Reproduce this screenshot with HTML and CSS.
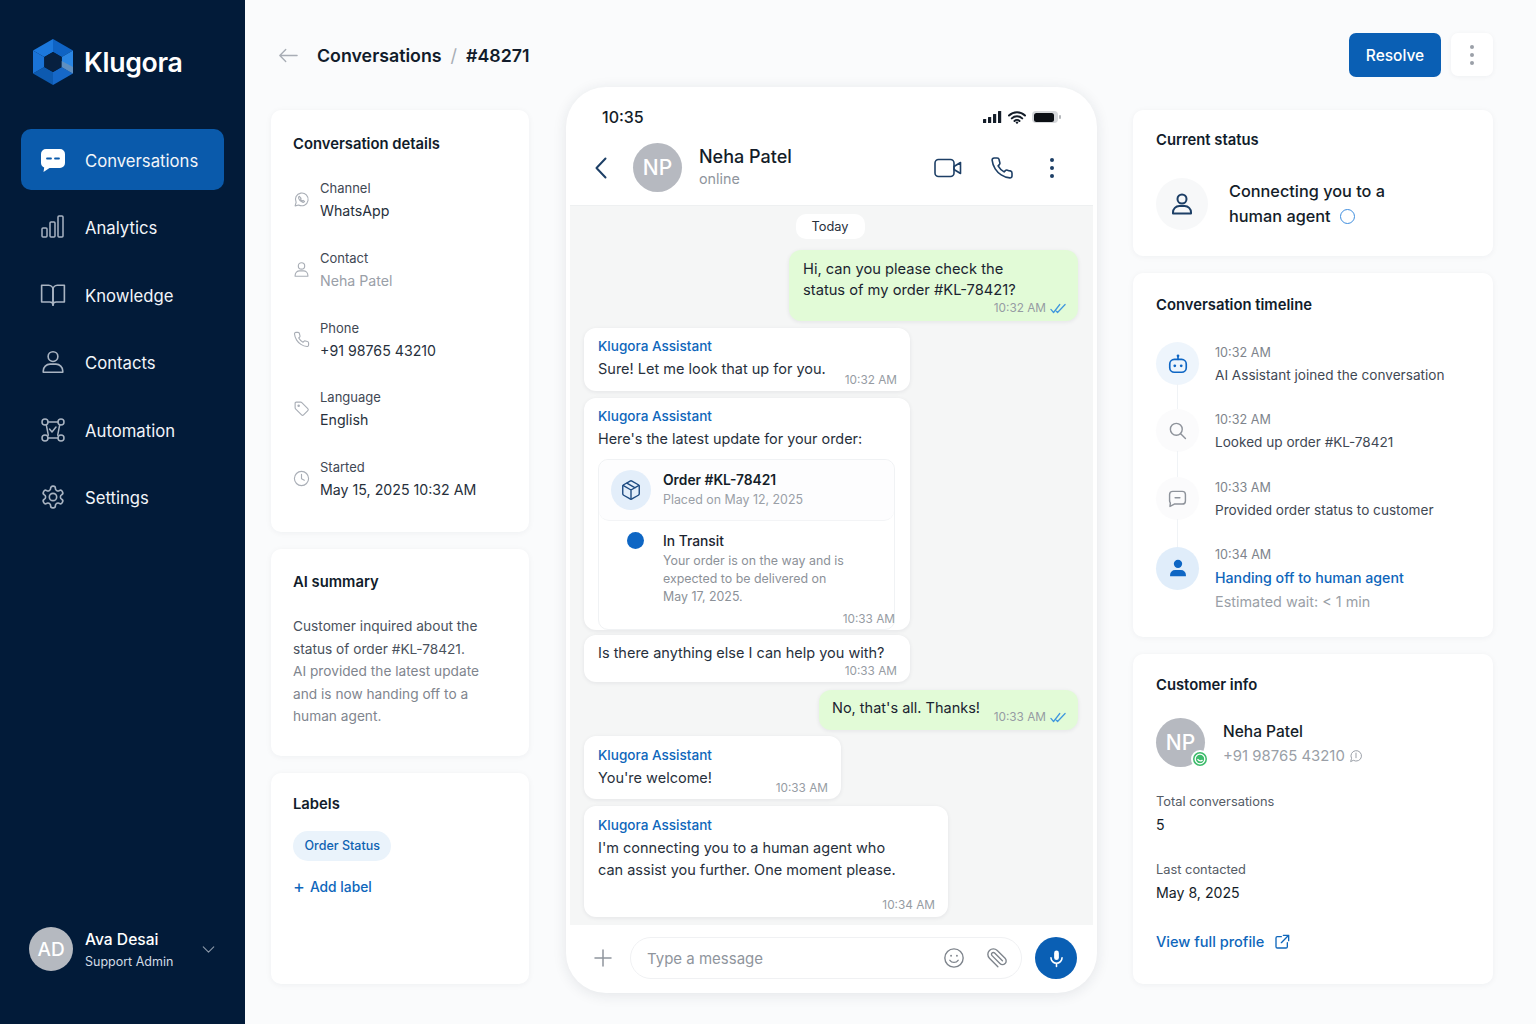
FILE: index.html
```html
<!DOCTYPE html>
<html lang="en">
<head>
<meta charset="utf-8">
<title>Klugora – Conversation #48271</title>
<link rel="stylesheet" href="styles.css">
</head>
<body>
<svg class="defs" aria-hidden="true">
  <symbol id="i-phone" viewBox="0 0 24 24"><path d="M22 16.92v3a2 2 0 0 1-2.18 2 19.79 19.79 0 0 1-8.63-3.07 19.5 19.5 0 0 1-6-6 19.79 19.79 0 0 1-3.07-8.67A2 2 0 0 1 4.11 2h3a2 2 0 0 1 2 1.72 12.84 12.84 0 0 0 .7 2.81 2 2 0 0 1-.45 2.11L8.09 9.91a16 16 0 0 0 6 6l1.27-1.27a2 2 0 0 1 2.11-.45 12.84 12.84 0 0 0 2.81.7A2 2 0 0 1 22 16.92z"/></symbol>
  <symbol id="i-person" viewBox="0 0 24 24"><circle cx="12" cy="7" r="4.5"/><path d="M3 21.5v-1.2A6.3 6.3 0 0 1 9.3 14h5.4a6.3 6.3 0 0 1 6.3 6.3v1.2z"/></symbol>
  <symbol id="i-checks" viewBox="0 0 18 12"><path d="M1 7l3 3.5L11 1.5M7 9l1.5 1.5L17 1.5"/></symbol>
</svg>

<div class="app">
  <aside class="sidebar">
    <div class="brand">
      <svg class="brand-mark" viewBox="0 0 40 46">
        <polygon points="20,0 20,13 11.3,18 0,11.5" fill="#1c78dc"/>
        <polygon points="20,0 40,11.5 28.7,18 20,13" fill="#0f63c4"/>
        <polygon points="40,11.5 40,34.5 28.7,28 28.7,18" fill="#2a86e4"/>
        <polygon points="40,34.5 20,46 20,33 28.7,28" fill="#1668c8"/>
        <polygon points="20,46 0,34.5 11.3,28 20,33" fill="#0d5ab0"/>
        <polygon points="0,34.5 0,11.5 11.3,18 11.3,28" fill="#1a73d6"/>
        <polygon points="20,13 28.7,18 28.7,28 20,33 11.3,28 11.3,18" fill="#07203f"/>
        <polygon points="28.7,22 40,28 40,34.5 28.7,28" fill="#5f8fc0"/>
      </svg>
      <span class="brand-name">Klugora</span>
    </div>
    <nav class="nav">
      <a class="nav-item active">
        <svg class="nav-icon" viewBox="0 0 26 26"><path class="fill-white" d="M6 2h14a5 5 0 0 1 5 5v9a5 5 0 0 1-5 5H9.5L3.5 25l.7-4.6A5 5 0 0 1 1 16V7a5 5 0 0 1 5-5z"/><path class="dash" d="M7 11.5h4M15 11.5h4"/></svg>
        <span>Conversations</span>
      </a>
      <a class="nav-item">
        <svg class="nav-icon" viewBox="0 0 26 26"><rect x="2" y="14" width="5" height="9" rx="1"/><rect x="10" y="8" width="5" height="15" rx="1"/><rect x="18" y="2" width="5" height="21" rx="1"/></svg>
        <span>Analytics</span>
      </a>
      <a class="nav-item">
        <svg class="nav-icon" viewBox="0 0 24 24"><path d="M1.5 3H8a4 4 0 0 1 4 4v14.5a3 3 0 0 0-3-3H1.5z"/><path d="M22.5 3H16a4 4 0 0 0-4 4v14.5a3 3 0 0 1 3-3h7.5z"/></svg>
        <span>Knowledge</span>
      </a>
      <a class="nav-item">
        <svg class="nav-icon"><use href="#i-person"/></svg>
        <span>Contacts</span>
      </a>
      <a class="nav-item">
        <svg class="nav-icon" viewBox="0 0 26 26"><circle cx="5" cy="5" r="3"/><circle cx="21" cy="5" r="3"/><circle cx="5" cy="21" r="3"/><circle cx="21" cy="21" r="3"/><path d="M8 5h10M8 21h10M6.3 7.8l2 10.4M19.7 7.8l-2 10.4"/><path d="M9.5 12l2.5 3 4-5"/></svg>
        <span>Automation</span>
      </a>
      <a class="nav-item">
        <svg class="nav-icon" viewBox="0 0 24 24"><path d="M12.22 2h-.44a2 2 0 0 0-2 2v.18a2 2 0 0 1-1 1.73l-.43.25a2 2 0 0 1-2 0l-.15-.08a2 2 0 0 0-2.73.73l-.22.38a2 2 0 0 0 .73 2.73l.15.1a2 2 0 0 1 1 1.72v.51a2 2 0 0 1-1 1.74l-.15.09a2 2 0 0 0-.73 2.73l.22.38a2 2 0 0 0 2.73.73l.15-.08a2 2 0 0 1 2 0l.43.25a2 2 0 0 1 1 1.73V20a2 2 0 0 0 2 2h.44a2 2 0 0 0 2-2v-.18a2 2 0 0 1 1-1.73l.43-.25a2 2 0 0 1 2 0l.15.08a2 2 0 0 0 2.73-.73l.22-.39a2 2 0 0 0-.73-2.73l-.15-.08a2 2 0 0 1-1-1.74v-.5a2 2 0 0 1 1-1.74l.15-.09a2 2 0 0 0 .73-2.73l-.22-.38a2 2 0 0 0-2.73-.73l-.15.08a2 2 0 0 1-2 0l-.43-.25a2 2 0 0 1-1-1.73V4a2 2 0 0 0-2-2z"/><circle cx="12" cy="12" r="3.4"/></svg>
        <span>Settings</span>
      </a>
    </nav>
    <div class="user">
      <div class="user-avatar">AD</div>
      <div class="user-text">
        <div class="user-name">Ava Desai</div>
        <div class="user-role">Support Admin</div>
      </div>
      <svg class="user-chev" viewBox="0 0 14 8"><path d="M1 1l6 6 6-6"/></svg>
    </div>
  </aside>

  <main class="main">
    <section class="col">
      <header class="crumbs">
        <svg class="back" viewBox="0 0 22 16"><path d="M21 8H2M8.5 1.5L2 8l6.5 6.5"/></svg>
        <span class="crumb">Conversations</span>
        <span class="crumb-sep">/</span>
        <span class="crumb">#48271</span>
      </header>

      <div class="card details">
        <h2 class="card-title">Conversation details</h2>
        <div class="detail-list">
          <div class="detail">
            <svg class="detail-icon" viewBox="0 0 24 24"><path d="M3 21l1.4-5A9 9 0 1 1 8 19.7z"/><path d="M9 7.5c-1 .5-1.4 1.5-1 2.8a8 8 0 0 0 5.5 5.5c1.3.4 2.3 0 2.8-1l-2-1.5-1 .8a5 5 0 0 1-2.7-2.8l.8-1z"/></svg>
            <div><div class="detail-label">Channel</div><div class="detail-value">WhatsApp</div></div>
          </div>
          <div class="detail">
            <svg class="detail-icon"><use href="#i-person"/></svg>
            <div><div class="detail-label">Contact</div><div class="detail-value muted">Neha Patel</div></div>
          </div>
          <div class="detail">
            <svg class="detail-icon"><use href="#i-phone"/></svg>
            <div><div class="detail-label">Phone</div><div class="detail-value">+91 98765 43210</div></div>
          </div>
          <div class="detail">
            <svg class="detail-icon" viewBox="0 0 24 24"><path d="M3 4.5A1.5 1.5 0 0 1 4.5 3H11a2 2 0 0 1 1.4.6l8.5 8.5a2 2 0 0 1 0 2.8l-6 6a2 2 0 0 1-2.8 0L3.6 12.4A2 2 0 0 1 3 11z"/><circle cx="8" cy="8" r="1"/></svg>
            <div><div class="detail-label">Language</div><div class="detail-value">English</div></div>
          </div>
          <div class="detail">
            <svg class="detail-icon" viewBox="0 0 24 24"><circle cx="12" cy="12" r="10"/><path d="M12 6v6.5l4 2"/></svg>
            <div><div class="detail-label">Started</div><div class="detail-value">May 15, 2025 10:32 AM</div></div>
          </div>
        </div>
      </div>

      <div class="card summary">
        <h2 class="card-title">AI summary</h2>
        <p class="summary-text">Customer inquired about the<br>status of order #KL-78421.<br><span class="fade">AI provided the latest update<br>and is now handing off to a<br>human agent.</span></p>
      </div>

      <div class="card labels">
        <h2 class="card-title">Labels</h2>
        <span class="tag">Order Status</span>
        <a class="add-label"><span class="add-plus">+</span>Add label</a>
      </div>
    </section>

    <section class="phone-col">
      <div class="phone">
        <div class="status-bar">
          <span class="clock">10:35</span>
          <span class="status-icons">
            <svg class="signal" viewBox="0 0 19 12"><rect x="0" y="8" width="3.2" height="4" rx=".6"/><rect x="5" y="6" width="3.2" height="6" rx=".6"/><rect x="10" y="3" width="3.2" height="9" rx=".6"/><rect x="15" y="0" width="3.2" height="12" rx=".6"/></svg>
            <svg class="wifi" viewBox="0 0 18 13"><path d="M1 4.5a11.5 11.5 0 0 1 16 0M3.8 7.4a7.5 7.5 0 0 1 10.4 0M6.5 10a3.6 3.6 0 0 1 5 0"/><circle cx="9" cy="11.6" r="1.2"/></svg>
            <span class="battery"><span class="battery-level"></span></span>
          </span>
        </div>
        <div class="chat-head">
          <svg class="chat-back" viewBox="0 0 12 22"><path d="M10.5 1.5L1.5 11l9 9.5"/></svg>
          <div class="avatar chat-avatar">NP</div>
          <div class="chat-who">
            <div class="chat-name">Neha Patel</div>
            <div class="chat-status">online</div>
          </div>
          <svg class="head-icon video" viewBox="0 0 28 20"><rect x="1" y="1.5" width="19" height="17" rx="3.5"/><path d="M20 8.5l6.5-4v11l-6.5-4z"/></svg>
          <svg class="head-icon call"><use href="#i-phone"/></svg>
          <span class="head-dots"><i></i><i></i><i></i></span>
        </div>

        <div class="chat">
          <div class="day">Today</div>

          <div class="bubble out first-out">
            <div class="msg">Hi, can you please check the<br>status of my order #KL-78421?</div>
            <div class="meta"><span class="time">10:32 AM</span><svg class="checks"><use href="#i-checks"/></svg></div>
          </div>

          <div class="bubble in b-lookup">
            <div class="sender">Klugora Assistant</div>
            <div class="row-end"><div class="msg">Sure! Let me look that up for you.</div><span class="time">10:32 AM</span></div>
          </div>

          <div class="bubble in b-order">
            <div class="sender">Klugora Assistant</div>
            <div class="msg">Here's the latest update for your order:</div>
            <div class="order">
              <div class="order-head">
                <div class="order-icon">
                  <svg viewBox="0 0 24 24"><path d="M21 8a2 2 0 0 0-1-1.73l-7-4a2 2 0 0 0-2 0l-7 4A2 2 0 0 0 3 8v8a2 2 0 0 0 1 1.73l7 4a2 2 0 0 0 2 0l7-4A2 2 0 0 0 21 16Z"/><path d="M3.3 7l8.7 5 8.7-5M12 22V12M7.5 4.6l9 5.1"/></svg>
                </div>
                <div>
                  <div class="order-id">Order #KL-78421</div>
                  <div class="order-date">Placed on May 12, 2025</div>
                </div>
              </div>
              <div class="transit">
                <span class="transit-dot"></span>
                <div>
                  <div class="transit-title">In Transit</div>
                  <div class="transit-text">Your order is on the way and is<br>expected to be delivered on<br>May 17, 2025.</div>
                </div>
              </div>
              <div class="time order-time">10:33 AM</div>
            </div>
          </div>

          <div class="bubble in b-else">
            <div class="msg">Is there anything else I can help you with?</div>
            <div class="time align-right">10:33 AM</div>
          </div>

          <div class="bubble out second-out">
            <div class="msg">No, that's all. Thanks!</div>
            <div class="meta low"><span class="time">10:33 AM</span><svg class="checks"><use href="#i-checks"/></svg></div>
          </div>

          <div class="bubble in b-welcome">
            <div class="sender">Klugora Assistant</div>
            <div class="row-end"><div class="msg">You're welcome!</div><span class="time">10:33 AM</span></div>
          </div>

          <div class="bubble in b-connect">
            <div class="sender">Klugora Assistant</div>
            <div class="msg">I'm connecting you to a human agent who<br>can assist you further. One moment please.</div>
            <div class="time align-right connect-time">10:34 AM</div>
          </div>
        </div>

        <div class="composer">
          <svg class="plus" viewBox="0 0 18 18"><path d="M9 1v16M1 9h16"/></svg>
          <div class="input">
            <span class="placeholder">Type a message</span>
            <svg class="input-icon" viewBox="0 0 24 24"><circle cx="12" cy="12" r="10"/><path d="M7.5 14.5a5.5 5.5 0 0 0 9 0"/><circle class="solid" cx="8.8" cy="9.5" r="1"/><circle class="solid" cx="15.2" cy="9.5" r="1"/></svg>
            <svg class="input-icon clip" viewBox="0 0 24 24"><path d="M21.44 11.05l-9.19 9.19a6 6 0 0 1-8.49-8.49l8.57-8.57A4 4 0 1 1 18 8.84l-8.59 8.57a2 2 0 0 1-2.83-2.83l8.49-8.48"/></svg>
          </div>
          <button class="mic">
            <svg viewBox="0 0 24 24"><rect class="solid-white" x="9" y="2" width="6" height="12" rx="3"/><path d="M5 11a7 7 0 0 0 14 0M12 18v4"/></svg>
          </button>
        </div>
      </div>
    </section>

    <section class="col">
      <div class="actions">
        <button class="resolve">Resolve</button>
        <button class="more"><i></i><i></i><i></i></button>
      </div>

      <div class="card status">
        <h2 class="card-title">Current status</h2>
        <div class="status-row">
          <div class="status-icon"><svg><use href="#i-person"/></svg></div>
          <div class="status-text">Connecting you to a<br>human agent <span class="ring"></span></div>
        </div>
      </div>

      <div class="card timeline">
        <h2 class="card-title">Conversation timeline</h2>
        <div class="tl-list">
          <div class="tl-item">
            <div class="tl-icon blue">
              <svg viewBox="0 0 24 24"><rect x="3" y="7" width="18" height="14" rx="5"/><path d="M12 7V4"/><circle class="solid-blue" cx="12" cy="3" r="1.5"/><circle class="solid-blue" cx="8.5" cy="14" r="1.5"/><circle class="solid-blue" cx="15.5" cy="14" r="1.5"/></svg>
            </div>
            <div><div class="tl-time">10:32 AM</div><div class="tl-text">AI Assistant joined the conversation</div></div>
          </div>
          <div class="tl-item">
            <div class="tl-icon"><svg viewBox="0 0 24 24"><circle cx="10.5" cy="10.5" r="7.5"/><path d="M16 16l6 6"/></svg></div>
            <div><div class="tl-time">10:32 AM</div><div class="tl-text">Looked up order #KL-78421</div></div>
          </div>
          <div class="tl-item">
            <div class="tl-icon"><svg viewBox="0 0 24 24"><path d="M6 3h12a4 4 0 0 1 4 4v8a4 4 0 0 1-4 4H8l-5.5 3L3 17.5A4 4 0 0 1 2 15V7a4 4 0 0 1 4-4z"/><path d="M9 11h6"/></svg></div>
            <div><div class="tl-time">10:33 AM</div><div class="tl-text">Provided order status to customer</div></div>
          </div>
          <div class="tl-item last">
            <div class="tl-icon big">
              <svg viewBox="0 0 24 24"><circle class="solid-blue" cx="12" cy="7" r="5"/><path class="solid-blue" d="M2.5 22v-1.5A6 6 0 0 1 8.5 14.5h7a6 6 0 0 1 6 6V22z"/></svg>
            </div>
            <div><div class="tl-time">10:34 AM</div><div class="tl-text hand">Handing off to human agent</div><div class="tl-wait">Estimated wait: &lt; 1 min</div></div>
          </div>
        </div>
      </div>

      <div class="card customer">
        <h2 class="card-title">Customer info</h2>
        <div class="cust-head">
          <div class="avatar cust-avatar">NP
            <span class="wa-badge"><svg viewBox="0 0 16 16"><circle cx="8" cy="8" r="5.5"/><path d="M5.5 8.5c1 1.5 3 2 5 1"/></svg></span>
          </div>
          <div>
            <div class="cust-name">Neha Patel</div>
            <div class="cust-phone">+91 98765 43210
              <svg viewBox="0 0 24 24"><path d="M3 21l1.4-5A9 9 0 1 1 8 19.7z"/><path d="M12 7v8"/></svg>
            </div>
          </div>
        </div>
        <div class="cust-stat"><div class="stat-label">Total conversations</div><div class="stat-value">5</div></div>
        <div class="cust-stat"><div class="stat-label">Last contacted</div><div class="stat-value">May 8, 2025</div></div>
        <a class="profile-link">View full profile
          <svg viewBox="0 0 24 24"><path d="M11 4H5a2 2 0 0 0-2 2v13a2 2 0 0 0 2 2h13a2 2 0 0 0 2-2v-6"/><path d="M14 2h8v8M22 2L11 13"/></svg>
        </a>
      </div>
    </section>
  </main>
</div>
</body>
</html>
```

FILE: styles.css
```css
* { box-sizing: border-box; }
html, body { margin: 0; padding: 0; height: 100%; }
body { font-family: Inter, "Liberation Sans", sans-serif; color: #1b2430; background: #fafbfc; overflow: hidden; }
h2, p { margin: 0; }
svg { display: block; fill: none; stroke: currentColor; stroke-linecap: round; stroke-linejoin: round; }
.defs { width: 0; height: 0; position: absolute; }
.app { display: flex; width: 1536px; height: 1024px; }

/* Sidebar */
.sidebar { width: 245px; flex: none; background: #021b39; color: #fff; display: flex; flex-direction: column; padding: 39px 21px 0; }
.brand { display: flex; align-items: center; gap: 11px; padding-left: 12px; height: 46px; }
.brand-mark { width: 40px; height: 46px; stroke: none; flex: none; }
.brand-name { font-size: 26.7px; font-weight: 600; letter-spacing: -0.3px; }
.nav { display: flex; flex-direction: column; gap: 6.5px; margin-top: 44px; }
.nav-item { display: flex; align-items: center; gap: 19px; height: 61px; padding-left: 19px; border-radius: 10px; font-size: 16.7px; color: #f2f5f9; }
.nav-item span { padding-top: 2px; }
.nav-item.active { background: #0a5aab; }
.nav-icon { width: 26px; height: 26px; color: #a9b4c2; stroke-width: 1.5; flex: none; }
.fill-white { fill: #fff; stroke: none; }
.dash { stroke: #0a5aab; stroke-width: 1.8; }
.user { margin-top: auto; margin-bottom: 51px; display: flex; align-items: center; padding-left: 8px; }
.user-avatar { width: 44px; height: 44px; border-radius: 50%; background: #b5b9c0; color: #fff; font-size: 19px; font-weight: 500; display: flex; align-items: center; justify-content: center; }
.user-text { margin-left: 12px; padding-top: 4px; }
.user-name { font-size: 15.6px; font-weight: 500; line-height: 22px; }
.user-role { font-size: 12.5px; line-height: 22px; color: #d3dbe5; }
.user-chev { width: 13px; height: 7px; margin-left: auto; margin-right: 9px; color: #8b98a8; stroke-width: 1.3; }

/* Main */
.main { flex: 1; display: grid; grid-template-columns: 258px 532px 360px; column-gap: 36px; padding: 33px 0 31px 26px; }
.col { display: flex; flex-direction: column; gap: 17px; padding-bottom: 9px; min-height: 0; }
.card { background: #fff; border-radius: 10px; box-shadow: 0 1px 6px rgba(25, 40, 60, .05); padding: 23px 22px; }
.card-title { font-size: 14.8px; line-height: 20px; font-weight: 600; color: #111c2b; }

/* Breadcrumb */
.crumbs { display: flex; align-items: center; height: 44px; margin-bottom: 16px; padding-left: 7px; }
.back { width: 20px; height: 15px; color: #a8adb5; stroke-width: 1.5; margin-right: 19px; flex: none; }
.crumb { font-size: 17.8px; font-weight: 600; color: #111c2b; }
.crumb-sep { color: #a8adb5; font-size: 18px; margin: 0 9px; }

/* Details */
.details { height: 422px; padding-top: 24px; }
.detail-list { display: flex; flex-direction: column; gap: 24.75px; margin-top: 23px; }
.detail { display: flex; align-items: center; gap: 10px; }
.detail-icon { width: 17px; height: 17px; color: #a9aeb6; stroke-width: 1.6; flex: none; }
.detail-label { font-size: 13px; line-height: 22px; color: #3f4854; }
.detail-value { font-size: 14.2px; line-height: 23px; color: #27303c; }
.muted { color: #9aa0a8; }

/* Summary */
.summary { height: 207px; padding-top: 23px; }
.summary-text { margin-top: 23px; font-size: 13.7px; line-height: 22.5px; color: #4a525d; }
.fade { color: #7f858e; }

/* Labels */
.labels { flex: 1; padding-top: 21px; }
.tag { display: inline-block; margin-top: 17px; padding: 0 11.5px; height: 30px; line-height: 30px; border-radius: 15px; background: #eaf3fb; color: #0e62b2; font-size: 12.5px; font-weight: 500; vertical-align: top; }
.add-label { display: flex; align-items: center; margin-top: 16px; font-size: 13.8px; line-height: 20px; font-weight: 500; color: #0e66bb; }
.add-plus { font-size: 18px; font-weight: 400; margin-right: 5px; }

/* Phone */
.phone-col { padding: 54px 0 0 1px; display: flex; }
.phone { flex: 1; height: 906px; background: #fff; border-radius: 40px; padding: 0 4px; box-shadow: 0 2px 14px rgba(25, 40, 60, .10); display: flex; flex-direction: column; overflow: hidden; }
.status-bar { height: 56px; flex: none; padding: 20px 32px 0; display: flex; justify-content: space-between; align-items: flex-start; }
.clock { font-size: 16px; line-height: 20px; font-weight: 500; color: #141d29; }
.status-icons { display: flex; align-items: center; gap: 6px; height: 20px; }
.signal { width: 19px; height: 12px; fill: #141d29; stroke: none; }
.wifi { width: 18px; height: 13px; color: #141d29; stroke-width: 2; }
.wifi circle { fill: #141d29; stroke: none; }
.battery { position: relative; width: 26px; height: 12px; margin-right: 3px; border-radius: 4px; background: #d6d8db; padding: 1.5px 4px 1.5px 1.5px; display: block; }
.battery::after { content: ""; position: absolute; right: -3px; top: 4px; width: 2px; height: 4px; border-radius: 1px; background: #b5b8bc; }
.battery-level { display: block; height: 100%; background: #0b0f14; border-radius: 2.5px; }
.chat-head { height: 62px; flex: none; display: flex; align-items: flex-start; padding-left: 25px; color: #1d3f66; }
.chat-back { width: 12px; height: 22px; margin-top: 14px; stroke-width: 2; flex: none; }
.avatar { border-radius: 50%; background: #b6b9c0; color: #fff; font-weight: 500; display: flex; align-items: center; justify-content: center; position: relative; flex: none; }
.chat-avatar { width: 49px; height: 49px; font-size: 21px; margin-left: 26px; }
.chat-who { margin-left: 17px; }
.chat-name { font-size: 18px; line-height: 26px; font-weight: 500; color: #141d29; margin: 1px 0 -1px; }
.chat-status { font-size: 14.3px; line-height: 20px; color: #8f959d; }
.head-icon { stroke-width: 1.6; flex: none; }
.video { width: 28px; height: 20px; margin: 15px 0 0 auto; }
.call { width: 24px; height: 24px; margin: 13px 0 0 28px; }
.head-dots { display: flex; flex-direction: column; gap: 4px; margin: 15px 39px 0 36px; }
.head-dots i, .more i { display: block; width: 4px; height: 4px; border-radius: 50%; background: #1d3f66; }

/* Chat */
.chat { flex: 1; min-height: 0; background: #f5f6f6; border-top: 1px solid #eef0f1; padding: 8px 15px 0 14px; display: flex; flex-direction: column; align-items: flex-start; gap: 7px; }
.day { align-self: center; width: 69px; height: 25px; margin: 0 2px 4px 0; border-radius: 10px; background: #fff; font-size: 12.8px; line-height: 25px; text-align: center; color: #27303c; }
.bubble { border-radius: 12px; background: #fff; box-shadow: 0 1px 4px rgba(20, 30, 45, .08); padding: 0 13px 0 14px; font-size: 14.5px; color: #27303c; }
.bubble.out { align-self: flex-end; background: #e2fbd7; color: #1b2430; }
.msg { line-height: 22px; }
.sender { font-size: 13.55px; line-height: 20px; font-weight: 500; color: #0e66bb; padding-top: 8px; }
.time { font-size: 11.8px; line-height: 16px; color: #969ca3; white-space: nowrap; }
.meta { display: flex; align-items: center; justify-content: flex-end; gap: 4px; }
.checks { width: 16px; height: 11px; color: #3f97de; stroke-width: 1.4; }
.row-end { display: flex; justify-content: space-between; align-items: flex-end; }
.align-right { text-align: right; }
.first-out { width: 289px; padding: 9px 12px 5px 14px; font-size: 14.7px; }
.first-out .msg { line-height: 21px; }
.first-out .meta { margin-top: -1px; }
.b-lookup { width: 326px; height: 63px; }
.b-lookup .msg { margin-top: 2px; }
.b-lookup .time { margin-bottom: -8px; }
.b-order { width: 326px; height: 232px; padding-right: 15px; font-size: 14.4px; }
.b-order .msg { margin-top: 2px; }
.order { margin-top: 9px; height: 171px; border: 1px solid #f0f2f4; border-radius: 10px; display: flex; flex-direction: column; }
.order-head { height: 61px; flex: none; display: flex; align-items: center; gap: 12px; padding-left: 12px; border-bottom: 1px solid #f3f4f6; background: #fdfdfe; border-radius: 10px; }
.order-icon { width: 40px; height: 40px; border-radius: 50%; background: #e3eefa; color: #1d4a80; display: flex; align-items: center; justify-content: center; flex: none; }
.order-icon svg { width: 22px; height: 22px; stroke-width: 1.5; }
.order-id { font-size: 13.8px; line-height: 20px; font-weight: 600; color: #141d29; }
.order-date { font-size: 12.4px; line-height: 20px; color: #9a9fa7; }
.transit { display: flex; gap: 19px; padding: 10px 0 0 28px; }
.transit-dot { width: 17px; height: 17px; margin-top: 1px; border-radius: 50%; background: #0e66c4; flex: none; }
.transit-title { font-size: 13.8px; line-height: 20px; font-weight: 500; color: #1b2430; }
.transit-text { font-size: 12.4px; line-height: 18px; color: #8c9198; margin-top: 1px; }
.order-time { text-align: right; margin: 5px -1px 0 0; }
.b-else { width: 326px; height: 47px; margin-top: -2px; padding-top: 7px; }
.b-else .time { margin-top: -1px; }
.second-out { width: 259px; height: 40px; display: flex; justify-content: space-between; padding: 7px 12px 0 13px; margin-top: 1px; }
.meta.low { margin-top: 12px; align-self: flex-start; }
.b-welcome { width: 257px; height: 63px; margin-top: -1px; }
.b-welcome .sender, .b-connect .sender { padding-top: 9px; }
.b-welcome .msg { margin-top: 2px; }
.b-welcome .time { margin-bottom: -7px; }
.b-connect { width: 364px; height: 111px; }
.b-connect .msg { margin-top: 2px; }
.connect-time { margin-top: 16px; }

/* Composer */
.composer { height: 68px; flex: none; display: flex; align-items: flex-start; padding: 12px 16px 0 0; }
.plus { width: 18px; height: 18px; margin: 12px 0 0 24px; color: #8f959d; stroke-width: 1.5; flex: none; }
.input { flex: 1; height: 42px; margin-left: 18px; border: 1px solid #f0f1f3; border-radius: 21px; display: flex; align-items: center; padding: 0 13px 0 16px; gap: 21px; }
.placeholder { flex: 1; font-size: 15px; color: #8f959d; }
.input-icon { width: 22px; height: 22px; color: #7e848c; stroke-width: 1.5; }
.solid { fill: #7e848c; stroke: none; }
.clip { transform: rotate(90deg); }
.mic { width: 42px; height: 42px; margin-left: 13px; border: 0; border-radius: 50%; background: #0a5fb4; color: #fff; display: flex; align-items: center; justify-content: center; padding: 0; flex: none; }
.mic svg { width: 19px; height: 19px; stroke-width: 2; }
.solid-white { fill: #fff; stroke: none; }

/* Actions */
.actions { display: flex; justify-content: flex-end; align-items: flex-start; gap: 10px; height: 44px; margin-bottom: 16px; }
.resolve { width: 92px; height: 44px; border: 0; border-radius: 7px; background: #0a5fb4; color: #fff; font: 500 15.5px Inter, sans-serif; }
.more { width: 42px; height: 43px; border: 0; border-radius: 7px; background: #fff; box-shadow: 0 1px 5px rgba(25, 40, 60, .05); display: flex; flex-direction: column; align-items: center; justify-content: center; gap: 4px; padding: 0; }
.more i { background: #9ba0a8; }

/* Status */
.status { height: 146px; padding: 20px 23px; }
.status-row { display: flex; align-items: center; gap: 21px; margin-top: 28px; }
.status-icon { width: 52px; height: 52px; border-radius: 50%; background: #f7f8f9; color: #1d3f66; display: flex; align-items: center; justify-content: center; flex: none; }
.status-icon svg { width: 24px; height: 24px; stroke-width: 2; }
.status-text { font-size: 16.3px; line-height: 25px; font-weight: 500; color: #141d29; }
.ring { display: inline-block; width: 15px; height: 15px; border-radius: 50%; border: 1.5px solid #3f8ede; margin-left: 5px; vertical-align: -2px; }

/* Timeline */
.timeline { height: 364px; padding: 22px 23px; }
.tl-list { display: flex; flex-direction: column; margin-top: 27px; }
.tl-item { display: flex; gap: 16px; height: 67.3px; position: relative; }
.tl-item.last { height: auto; }
.tl-item:not(.last)::before { content: ""; position: absolute; left: 20.5px; top: 42px; height: 28px; width: 1px; background: #f0f3f6; }
.tl-icon { width: 43px; height: 43px; border-radius: 50%; background: #fbfbfc; color: #8e939b; display: flex; align-items: center; justify-content: center; flex: none; }
.tl-icon svg { width: 19px; height: 19px; stroke-width: 1.8; }
.tl-icon.blue { background: #eef5fc; color: #0e66c4; }
.tl-icon.blue svg { width: 22px; height: 22px; }
.tl-icon.big { background: #e0edfa; color: #0e66c4; margin-top: 3px; }
.tl-icon.big svg { width: 20px; height: 20px; }
.solid-blue { fill: #0e66c4; stroke: none; }
.tl-time { font-size: 12.6px; line-height: 22px; color: #7e848c; }
.tl-text { font-size: 13.6px; line-height: 23px; color: #3f4854; }
.tl-text.hand { font-size: 14.2px; color: #0e66bb; font-weight: 500; }
.tl-wait { font-size: 14.4px; line-height: 25px; color: #9a9fa7; }

/* Customer */
.customer { flex: 1; padding: 21px 23px; }
.cust-head { display: flex; align-items: flex-start; gap: 18px; margin-top: 23px; }
.cust-avatar { width: 49px; height: 49px; font-size: 21px; }
.wa-badge { position: absolute; right: -4px; bottom: -1px; width: 18px; height: 18px; border-radius: 50%; background: #3dbb6b; border: 2px solid #fff; color: #fff; }
.wa-badge svg { width: 14px; height: 14px; stroke-width: 1.5; }
.cust-name { font-size: 15.5px; line-height: 25px; font-weight: 500; color: #141d29; margin-top: 1px; }
.cust-phone { display: flex; align-items: center; gap: 4px; font-size: 14.9px; line-height: 24px; color: #9a9fa7; }
.cust-phone svg { width: 14px; height: 14px; stroke-width: 1.7; }
.cust-head + .cust-stat { margin-top: 22px; }
.cust-stat + .cust-stat { margin-top: 22px; }
.stat-label { font-size: 12.85px; line-height: 24px; color: #555c66; }
.stat-value { font-size: 14.15px; line-height: 22px; color: #141d29; }
.profile-link { display: flex; align-items: center; gap: 10px; margin-top: 27px; font-size: 14.55px; line-height: 22px; font-weight: 500; color: #0e66bb; }
.profile-link svg { width: 16px; height: 16px; stroke-width: 2; }
```
